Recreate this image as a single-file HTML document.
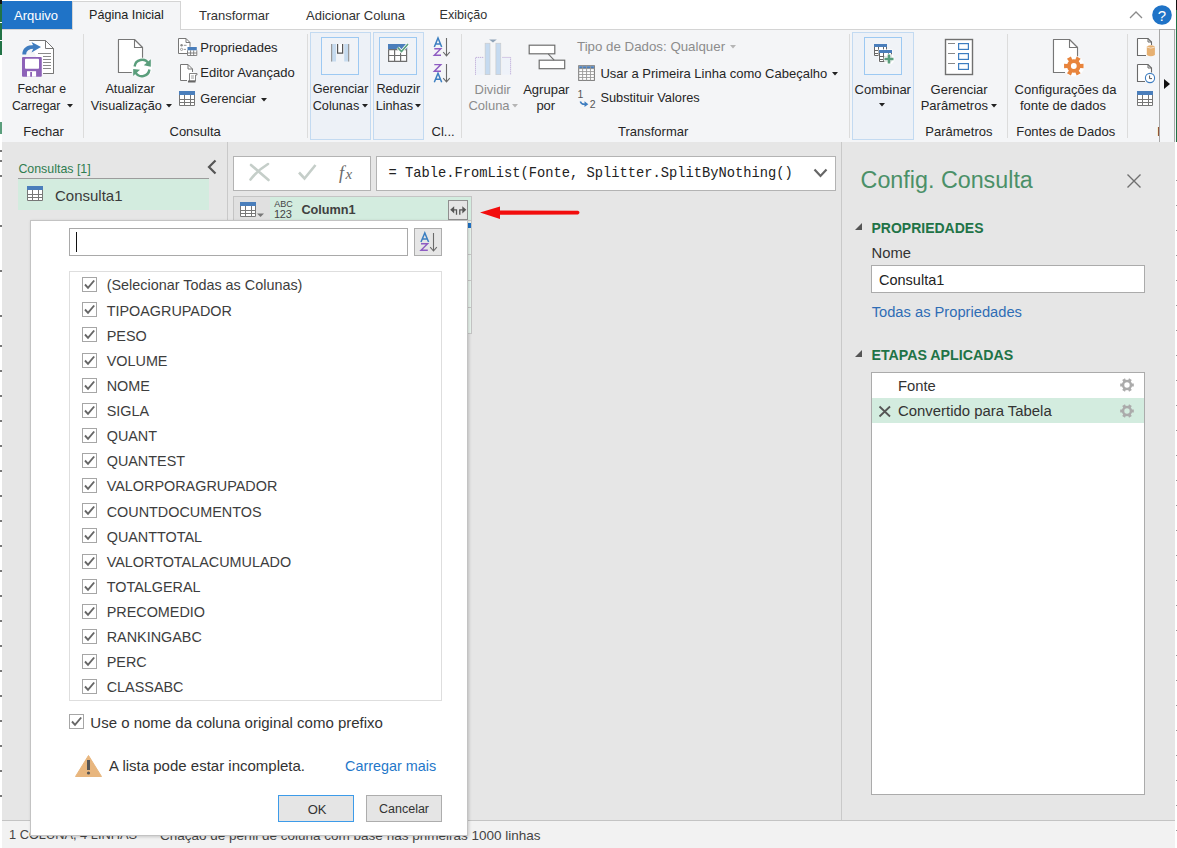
<!DOCTYPE html>
<html><head><meta charset="utf-8"><style>
html,body{margin:0;padding:0;}
body{width:1177px;height:848px;overflow:hidden;position:relative;background:#e6e6e6;font-family:"Liberation Sans",sans-serif;}
.a{position:absolute;}
.t{position:absolute;white-space:pre;line-height:1;font-family:"Liberation Sans",sans-serif;}
svg.a{overflow:visible;}
</style></head><body>
<div class="a" style="left:0px;top:0px;width:1177px;height:29px;background:#fff"></div>
<div class="a" style="left:2px;top:1px;width:70px;height:28px;background:#1f73c7"></div>
<div class="t" style="left:14.0px;top:8.80px;font-size:13px;color:#fff;">Arquivo</div>
<div class="a" style="left:72px;top:1px;width:109px;height:29px;background:#f4f5f7;border:1px solid #d4d4d4;border-bottom:none;box-sizing:border-box"></div>
<div class="t" style="left:89.0px;top:9.13px;font-size:12.6px;color:#222;">Página Inicial</div>
<div class="t" style="left:199.0px;top:8.80px;font-size:13px;color:#333;">Transformar</div>
<div class="t" style="left:306.0px;top:8.80px;font-size:13px;color:#333;">Adicionar Coluna</div>
<div class="t" style="left:439.6px;top:9.13px;font-size:12.6px;color:#333;">Exibição</div>
<svg class="a" style="left:1129px;top:10px;" width="14" height="9" viewBox="0 0 14 9"><path d="M1 8L7 2L13 8" fill="none" stroke="#8a8a8a" stroke-width="1.3"/></svg>
<svg class="a" style="left:1152px;top:5px;" width="20" height="20" viewBox="0 0 20 20"><circle cx="10" cy="10" r="9.8" fill="#1f73c7"/><text x="10" y="15.5" text-anchor="middle" font-family="Liberation Sans" font-size="15" fill="#fff">?</text></svg>
<div class="a" style="left:0px;top:29px;width:1177px;height:113px;background:#f4f5f7;border-top:1px solid #d4d4d4;box-sizing:border-box"></div>
<div class="a" style="left:73px;top:29px;width:107px;height:1px;background:#f4f5f7"></div>
<div class="a" style="left:83px;top:34px;width:1px;height:104px;background:#dcdcdc"></div>
<div class="a" style="left:307px;top:34px;width:1px;height:104px;background:#dcdcdc"></div>
<div class="a" style="left:461px;top:34px;width:1px;height:104px;background:#dcdcdc"></div>
<div class="a" style="left:849px;top:34px;width:1px;height:104px;background:#dcdcdc"></div>
<div class="a" style="left:1007px;top:34px;width:1px;height:104px;background:#dcdcdc"></div>
<div class="a" style="left:1127px;top:34px;width:1px;height:104px;background:#dcdcdc"></div>
<div class="t" style="left:23.3px;top:124.50px;font-size:13px;color:#262626;">Fechar</div>
<div class="t" style="left:169.5px;top:124.50px;font-size:13px;color:#262626;">Consulta</div>
<div class="t" style="left:431.5px;top:124.50px;font-size:13px;color:#262626;">Cl...</div>
<div class="t" style="left:618.0px;top:124.50px;font-size:13px;color:#262626;">Transformar</div>
<div class="t" style="left:925.3px;top:124.50px;font-size:13px;color:#262626;">Parâmetros</div>
<div class="t" style="left:1016.2px;top:124.50px;font-size:13px;color:#262626;">Fontes de Dados</div>
<div class="t" style="left:1157.0px;top:124.50px;font-size:13px;color:#262626;">I</div>
<div class="a" style="left:310px;top:32px;width:61px;height:108px;background:#edf1f7;border:1px solid #c3daf1;box-sizing:border-box"></div>
<div class="a" style="left:321px;top:37px;width:38px;height:38px;background:#f0f3f7;border:1.5px solid #9dc9f2;box-sizing:border-box"></div>
<div class="a" style="left:373px;top:32px;width:51px;height:108px;background:#edf1f7;border:1px solid #c3daf1;box-sizing:border-box"></div>
<div class="a" style="left:379px;top:37px;width:38px;height:38px;background:#f0f3f7;border:1.5px solid #9dc9f2;box-sizing:border-box"></div>
<div class="a" style="left:852px;top:32px;width:62px;height:108px;background:#edf1f7;border:1px solid #c3daf1;box-sizing:border-box"></div>
<div class="a" style="left:864px;top:37px;width:38px;height:38px;background:#f0f3f7;border:1.5px solid #9dc9f2;box-sizing:border-box"></div>
<div class="t" style="left:17.5px;top:83.29px;font-size:12.3px;color:#262626;">Fechar e</div>
<div class="t" style="left:11.9px;top:99.89px;font-size:12.3px;color:#262626;">Carregar</div>
<svg class="a" style="left:67px;top:103.5px;" width="6" height="4" viewBox="0 0 6 4"><path d="M0 0H6L3.0 3.5Z" fill="#222"/></svg>
<div class="t" style="left:105.4px;top:82.95px;font-size:12.7px;color:#262626;">Atualizar</div>
<div class="t" style="left:90.8px;top:99.55px;font-size:12.7px;color:#262626;">Visualização</div>
<svg class="a" style="left:166px;top:103.5px;" width="6" height="4" viewBox="0 0 6 4"><path d="M0 0H6L3.0 3.5Z" fill="#222"/></svg>
<div class="t" style="left:312.7px;top:82.95px;font-size:12.7px;color:#262626;">Gerenciar</div>
<div class="t" style="left:312.7px;top:99.55px;font-size:12.7px;color:#262626;">Colunas</div>
<svg class="a" style="left:362px;top:103.5px;" width="6" height="4" viewBox="0 0 6 4"><path d="M0 0H6L3.0 3.5Z" fill="#222"/></svg>
<div class="t" style="left:376.4px;top:82.95px;font-size:12.7px;color:#262626;">Reduzir</div>
<div class="t" style="left:375.7px;top:99.55px;font-size:12.7px;color:#262626;">Linhas</div>
<svg class="a" style="left:415px;top:103.5px;" width="6" height="4" viewBox="0 0 6 4"><path d="M0 0H6L3.0 3.5Z" fill="#222"/></svg>
<div class="t" style="left:474.5px;top:82.70px;font-size:13px;color:#8c8c8c;">Dividir</div>
<div class="t" style="left:468.4px;top:99.30px;font-size:13px;color:#8c8c8c;">Coluna</div>
<svg class="a" style="left:512px;top:103.5px;" width="6" height="4" viewBox="0 0 6 4"><path d="M0 0H6L3.0 3.5Z" fill="#b5b5b5"/></svg>
<div class="t" style="left:523.2px;top:82.70px;font-size:13px;color:#262626;">Agrupar</div>
<div class="t" style="left:536.4px;top:99.30px;font-size:13px;color:#262626;">por</div>
<div class="t" style="left:854.6px;top:82.70px;font-size:13px;color:#262626;">Combinar</div>
<svg class="a" style="left:879px;top:102.5px;" width="6" height="4" viewBox="0 0 6 4"><path d="M0 0H6L3.0 3.5Z" fill="#222"/></svg>
<div class="t" style="left:930.6px;top:82.70px;font-size:13px;color:#262626;">Gerenciar</div>
<div class="t" style="left:920.7px;top:99.30px;font-size:13px;color:#262626;">Parâmetros</div>
<svg class="a" style="left:991px;top:103.5px;" width="6" height="4" viewBox="0 0 6 4"><path d="M0 0H6L3.0 3.5Z" fill="#222"/></svg>
<div class="t" style="left:1014.6px;top:82.70px;font-size:13px;color:#262626;">Configurações da</div>
<div class="t" style="left:1020.0px;top:99.30px;font-size:13px;color:#262626;">fonte de dados</div>
<div class="t" style="left:200.3px;top:40.80px;font-size:13px;color:#262626;">Propriedades</div>
<div class="t" style="left:200.3px;top:66.40px;font-size:13px;color:#262626;">Editor Avançado</div>
<div class="t" style="left:200.3px;top:92.85px;font-size:12.7px;color:#262626;">Gerenciar</div>
<svg class="a" style="left:261px;top:98px;" width="6" height="4" viewBox="0 0 6 4"><path d="M0 0H6L3.0 3.5Z" fill="#222"/></svg>
<div class="t" style="left:577.0px;top:40.04px;font-size:13.3px;color:#8c8c8c;">Tipo de Dados: Qualquer</div>
<svg class="a" style="left:730px;top:45px;" width="6" height="4" viewBox="0 0 6 4"><path d="M0 0H6L3.0 3.5Z" fill="#b5b5b5"/></svg>
<div class="t" style="left:600.4px;top:66.50px;font-size:13px;color:#262626;">Usar a Primeira Linha como Cabeçalho</div>
<svg class="a" style="left:832px;top:72px;" width="6" height="4" viewBox="0 0 6 4"><path d="M0 0H6L3.0 3.5Z" fill="#222"/></svg>
<div class="t" style="left:600.4px;top:92.16px;font-size:12.8px;color:#262626;">Substituir Valores</div>
<svg class="a" style="left:18px;top:36px" width="40" height="44" viewBox="18 36 40 44"><path d="M29.5 40.5H45.5L53.5 48.5V73.5H43" fill="#fff" stroke="#777" stroke-width="1"/><path d="M36 40.5H45.5L53.5 48.5V73.5H36Z" fill="#fff"/><path d="M29.5 40.5H45.5L53.5 48.5V73.5H43M45.5 40.5V48.5H53.5" fill="none" stroke="#777" stroke-width="1"/><path d="M38 53.5H51M43 56.5H51M43 59.5H51M43 62.5H51M43 65.5H51M43 68.5H51" stroke="#8a8a8a" stroke-width="1"/><rect x="22" y="57" width="19.8" height="19.7" rx="1" fill="#8d62b8"/><rect x="25" y="58.8" width="14" height="10" rx="0.8" fill="#fff"/><rect x="27" y="71.2" width="9.1" height="5.5" fill="#fff"/><rect x="30.2" y="72" width="1.8" height="4.7" fill="#8d62b8"/><path d="M24.2 54.5C24.2 48.5 28.5 46.8 34.5 46.8" fill="none" stroke="#3f7cbf" stroke-width="3.8"/><path d="M31.5 42L41 47L31.5 52.5L34 47Z" fill="#3f7cbf"/></svg>
<svg class="a" style="left:112px;top:34px" width="42" height="46" viewBox="112 34 42 46"><path d="M118.5 39.5H134.5L142.5 47.5V57.5M131.5 72.5H118.5V39.5" fill="#fff" stroke="#777" stroke-width="1.1"/><path d="M119 40H134.5L142 47.5V72H119Z" fill="#fff"/><path d="M118.5 39.5H134.5L142.5 47.5V57.5M131.5 72.5H118.5V39.5M134.5 39.5V47.5H142.5" fill="none" stroke="#777" stroke-width="1.1"/><circle cx="142" cy="68" r="10" fill="#fff" opacity="0.9"/><path d="M134.6 66.5A7.5 7.5 0 0 1 148.5 63.5" fill="none" stroke="#5a9e7c" stroke-width="2.4"/><path d="M143.8 65.2L150.8 66.8V59.2Z" fill="#5a9e7c"/><path d="M149.4 69.5A7.5 7.5 0 0 1 135.5 72.5" fill="none" stroke="#5a9e7c" stroke-width="2.4"/><path d="M133.2 69L140 69.7L133.2 76Z" fill="#5a9e7c"/></svg>
<svg class="a" style="left:176px;top:36px" width="24" height="22" viewBox="176 36 24 22"><path d="M178.5 38.5H186L190 42.5V53.5H178.5Z" fill="#fff" stroke="#777" stroke-width="1"/><path d="M186 38.5V42.5H190" fill="none" stroke="#777" stroke-width="1"/><circle cx="181.6" cy="45.3" r="1.2" fill="#888"/><circle cx="181.6" cy="49.4" r="1.1" fill="none" stroke="#888" stroke-width="0.8"/><path d="M183.8 45.3H186.5M183.8 49.4H186" stroke="#888" stroke-width="0.9"/><rect x="187" y="46.8" width="10" height="9" fill="#fff"/><rect x="187.5" y="47" width="9.3" height="3.3" fill="#4a7ebb"/><path d="M187.5 50.3V55.5H196.8V50.3M187.5 53H196.8M190.6 50.3V55.5M193.7 50.3V55.5" fill="none" stroke="#777" stroke-width="0.9"/></svg>
<svg class="a" style="left:178px;top:62px" width="22" height="24" viewBox="178 62 22 24"><path d="M180.5 64.5H188L192.5 69V80.5H180.5Z" fill="#fff"/><path d="M180.5 64.5H188L192.5 69V72M187 80.5H180.5V64.5" fill="none" stroke="#777" stroke-width="1"/><path d="M188 64.5V69H192.5" fill="none" stroke="#777" stroke-width="1"/><path d="M189.5 73.5H197V75H195.5V81H189.5Z" fill="#fff" stroke="#777" stroke-width="0.9"/><path d="M191 76H194M191 78H194" stroke="#888" stroke-width="0.8"/><path d="M188 80.5H195.5V82.5H188Z" fill="#666"/></svg>
<svg class="a" style="left:177px;top:89px" width="20" height="19" viewBox="177 89 20 19"><rect x="179" y="91" width="16" height="15" fill="#fff"/><rect x="179" y="91" width="16" height="4" fill="#4a7ebb"/><path d="M179.5 95V105.5H194.5V95M184.5 95V106M190.5 95V106M179 99.5H195M179 102.5H195" fill="none" stroke="#777" stroke-width="1"/></svg>
<svg class="a" style="left:328px;top:42px" width="24" height="22" viewBox="328 42 24 22"><rect x="331" y="44" width="5" height="17.5" fill="#c6dbef"/><path d="M331.6 44V61.5" stroke="#999" stroke-width="1.2"/><rect x="344.2" y="44" width="5" height="17.5" fill="#c6dbef"/><path d="M348.6 44V61.5" stroke="#999" stroke-width="1.2"/><path d="M337.6 44V53.2H342.6V44" fill="#fff" stroke="#555" stroke-width="1.2"/></svg>
<svg class="a" style="left:386px;top:42px" width="24" height="22" viewBox="386 42 24 22"><rect x="388" y="44" width="19.2" height="5.6" fill="#4a7ebb"/><path d="M388.6 49.6V61.4H406.6V49.6M388.6 49.6H406.6M388.6 55.5H406.6M394.6 49.6V61.4M400.6 49.6V61.4" fill="#fff" stroke="#6e6e6e" stroke-width="1.2"/><path d="M397.8 47.6L401.5 51.6L408 44" fill="none" stroke="#fff" stroke-width="3.2"/><path d="M397.8 47.6L401.5 51.6L408 44" fill="none" stroke="#5a9e7c" stroke-width="1.6"/></svg>
<svg class="a" style="left:430px;top:36px" width="24" height="48" viewBox="430 36 24 48"><path d="M434.3 47L438 38L441.7 47M435.5 44H440.5" fill="none" stroke="#3c7fc1" stroke-width="1.5"/><path d="M434.3 48.7H440.8L434.3 55.300000000000004H441" fill="none" stroke="#8e5cc2" stroke-width="1.4"/><path d="M446.5 38V55.8M443.2 52.0L446.5 55.8L449.8 52.0" fill="none" stroke="#6a6a6a" stroke-width="1.1"/><path d="M434.3 82.2L438 73.2L441.7 82.2M435.5 79.2H440.5" fill="none" stroke="#3c7fc1" stroke-width="1.5"/><path d="M434.3 64.6H440.8L434.3 71.2H441" fill="none" stroke="#8e5cc2" stroke-width="1.4"/><path d="M446.5 64V81.9M443.2 78.10000000000001L446.5 81.9L449.8 78.10000000000001" fill="none" stroke="#6a6a6a" stroke-width="1.1"/></svg>
<svg class="a" style="left:473px;top:38px" width="40" height="38" viewBox="473 38 40 38"><rect x="475.3" y="57.2" width="8.7" height="17.5" fill="#eef2f9"/><path d="M475.5 74.7V57.4H483.5" fill="none" stroke="#a98cc8" stroke-width="0.8" stroke-dasharray="1 1"/><rect x="502.1" y="57.2" width="8.7" height="17.5" fill="#eef2f9"/><path d="M502.5 57.4H510.6V74.7" fill="none" stroke="#a98cc8" stroke-width="0.8" stroke-dasharray="1 1"/><rect x="485.1" y="43.2" width="4.9" height="31.5" fill="#c5daf0" stroke="#c9c9c9" stroke-width="0.6"/><rect x="495.9" y="43.2" width="4.9" height="31.5" fill="#c5daf0" stroke="#c9c9c9" stroke-width="0.6"/><path d="M489.1 39.4H496.8L493 42.6Z" fill="#8fa3b8"/></svg>
<svg class="a" style="left:527px;top:43px" width="40" height="28" viewBox="527 43 40 28"><rect x="529.2" y="45.2" width="25.6" height="8.6" fill="#fff" stroke="#6e6e6e" stroke-width="1.2"/><rect x="539.2" y="60.2" width="25.5" height="8.5" fill="#fff" stroke="#6e6e6e" stroke-width="1.2"/><path d="M548.2 53.8L554.1 60.2" stroke="#6e6e6e" stroke-width="1.1"/></svg>
<svg class="a" style="left:577px;top:64px" width="20" height="18" viewBox="577 64 20 18"><rect x="578.7" y="65.7" width="15.699999999999932" height="14.700000000000003" fill="#fff" stroke="#777" stroke-width="1"/><rect x="579.2" y="66.2" width="14.699999999999932" height="2.6" fill="#4a7ebb"/><path d="M582.62 65.7V80.4M586.55 65.7V80.4M590.48 65.7V80.4M578.7 68.64H594.4M578.7 71.58H594.4M578.7 74.52H594.4M578.7 77.46H594.4" stroke="#999" stroke-width="0.9"/></svg>
<svg class="a" style="left:576px;top:88px" width="24" height="22" viewBox="576 88 24 22"><text x="577.5" y="97.8" font-family="Liberation Sans" font-size="10.5" fill="#555">1</text><text x="589.8" y="108" font-family="Liberation Sans" font-size="10.5" fill="#555">2</text><path d="M580.3 101.5Q581.5 105 586 104.2" fill="none" stroke="#3d7dc0" stroke-width="1.5"/><path d="M584.5 101.2L588.3 104.3L584.5 107Z" fill="#3d7dc0"/></svg>
<svg class="a" style="left:872px;top:42px" width="24" height="22" viewBox="872 42 24 22"><rect x="874" y="44" width="13" height="12" fill="#fff"/><rect x="874" y="44" width="13" height="3" fill="#4a7ebb"/><path d="M874.5 47V55.5H886.5V47M878.5 47V56M883.5 47V56M874 50.5H887M874 53.5H887" fill="none" stroke="#666" stroke-width="1"/><rect x="878.5" y="49.4" width="14" height="12.8" fill="#fff"/><rect x="879" y="50" width="13" height="12" fill="#fff"/><rect x="879" y="50" width="13" height="3" fill="#4a7ebb"/><path d="M879.5 53V61.5H891.5V53M883.5 53V62M888.5 53V62M879 56.5H892M879 59.5H892" fill="none" stroke="#666" stroke-width="1"/><circle cx="889" cy="59" r="5.5" fill="#fff" opacity="0.85"/><path d="M889 54.5V63.5M884.5 59H893.5" stroke="#5a9e7c" stroke-width="2.6"/></svg>
<svg class="a" style="left:943px;top:37px" width="32" height="40" viewBox="943 37 32 40"><rect x="945.5" y="39.5" width="27" height="35" fill="#fff" stroke="#707070" stroke-width="1.4"/><path d="M948 43.5H955M948 53.5H955M948 63.5H955" stroke="#888" stroke-width="1.1"/><rect x="958.6" y="43.6" width="9.8" height="5.8" fill="none" stroke="#3d7dc0" stroke-width="1.2"/><rect x="958.6" y="53.6" width="9.8" height="5.8" fill="none" stroke="#3d7dc0" stroke-width="1.2"/><rect x="958.6" y="63.6" width="9.8" height="5.8" fill="none" stroke="#3d7dc0" stroke-width="1.2"/></svg>
<svg class="a" style="left:1050px;top:37px" width="38" height="42" viewBox="1050 37 38 42"><path d="M1053.5 39.5H1069.5L1077.5 47.5V57M1065 72.5H1053.5V39.5" fill="#fff" stroke="#777" stroke-width="1.1"/><path d="M1054 40H1069.5L1077 47.5V72H1054Z" fill="#fff"/><path d="M1053.5 39.5H1069.5L1077.5 47.5V55.5M1065 72.5H1053.5V39.5M1069.5 39.5V47.5H1077.5" fill="none" stroke="#777" stroke-width="1.1"/><circle cx="1073.8" cy="66" r="10.5" fill="#fff" opacity="0.9"/><path d="M1079.69 62.60L1080.32 64.07L1083.54 63.72L1083.54 68.28L1080.32 67.93L1079.69 69.40L1078.73 70.68L1080.65 73.29L1076.69 75.57L1075.39 72.61L1073.80 72.80L1072.21 72.61L1070.91 75.57L1066.95 73.29L1068.87 70.68L1067.91 69.40L1067.28 67.93L1064.06 68.28L1064.06 63.72L1067.28 64.07L1067.91 62.60L1068.87 61.32L1066.95 58.71L1070.91 56.43L1072.21 59.39L1073.80 59.20L1075.39 59.39L1076.69 56.43L1080.65 58.71L1078.73 61.32ZM1076.7 66A2.9 2.9 0 1 0 1070.8999999999999 66A2.9 2.9 0 1 0 1076.7 66Z" fill="#e8843c" fill-rule="evenodd"/></svg>
<svg class="a" style="left:1135px;top:36px" width="22" height="72" viewBox="1135 36 22 72"><path d="M1137.5 38.5H1148L1151.5 42V55.5H1137.5Z" fill="#fff"/><path d="M1137.5 38.5H1148L1151.5 42V45M1146 55.5H1137.5V38.5" fill="none" stroke="#6a6a6a" stroke-width="1.1"/><path d="M1148 38.5V42H1151.5" fill="none" stroke="#6a6a6a" stroke-width="1"/><path d="M1146.8 46.5V55Q1150.8 57.5 1154.9 55V46.5Q1150.8 44 1146.8 46.5Z" fill="#e6b071"/><path d="M1146.8 47Q1150.8 49.3 1154.9 47" fill="none" stroke="#fff" stroke-width="0.6"/><path d="M1137.5 64.5H1148L1151.5 68V81.5H1137.5Z" fill="#fff"/><path d="M1137.5 64.5H1148L1151.5 68V72.5M1145 81.5H1137.5V64.5" fill="none" stroke="#6a6a6a" stroke-width="1.1"/><path d="M1148 64.5V68H1151.5" fill="none" stroke="#6a6a6a" stroke-width="1"/><circle cx="1150" cy="78" r="4.6" fill="#fff" stroke="#3d7dc0" stroke-width="1.1"/><path d="M1149.6 75.5V78.6H1152" fill="none" stroke="#444" stroke-width="0.9"/><rect x="1137" y="91" width="16" height="15" fill="#fff"/><rect x="1137" y="91" width="16" height="4" fill="#4a7ebb"/><path d="M1137.5 95V105.5H1152.5V95M1142.5 95V106M1148.5 95V106M1137 99.5H1153M1137 102.5H1153" fill="none" stroke="#777" stroke-width="1"/></svg>
<div class="a" style="left:1159px;top:29px;width:16px;height:114px;background:#f4f5f7;border:1px solid #a8a8a8;box-sizing:border-box"></div>
<svg class="a" style="left:1163px;top:79px;" width="8" height="10" viewBox="0 0 8 10"><path d="M1 0V10L7 5Z" fill="#111"/></svg>
<div class="a" style="left:0px;top:142px;width:1177px;height:678px;background:#e6e6e6"></div>
<div class="a" style="left:227px;top:142px;width:1px;height:678px;background:#c9c9c9"></div>
<div class="a" style="left:841px;top:142px;width:1px;height:678px;background:#c9c9c9"></div>
<div class="t" style="left:18.4px;top:163.10px;font-size:12.4px;color:#2f7d50;transform:scaleY(1.08);transform-origin:0 80%;">Consultas [1]</div>
<svg class="a" style="left:206px;top:159px;" width="12" height="16" viewBox="0 0 12 16"><path d="M9.5 1.5L3 8L9.5 14.5" fill="none" stroke="#555" stroke-width="2.2"/></svg>
<div class="a" style="left:18px;top:178px;width:191px;height:1px;background:#9c9c9c"></div>
<div class="a" style="left:18px;top:179px;width:191px;height:31px;background:#d3ecdf"></div>
<div class="t" style="left:55.0px;top:188.00px;font-size:15px;color:#3a3a3a;">Consulta1</div>
<div class="a" style="left:233px;top:156px;width:138px;height:35px;background:#fff;border:1px solid #b3b3b3;box-sizing:border-box"></div>
<div class="a" style="left:376px;top:156px;width:460px;height:35px;background:#fff;border:1px solid #b3b3b3;box-sizing:border-box"></div>
<div class="t" style="left:388.4px;top:167.36px;font-size:13.75px;color:#222;font-family:'Liberation Mono',monospace;">= Table.FromList(Fonte, Splitter.SplitByNothing()</div>
<div class="a" style="left:233px;top:196px;width:239px;height:25px;background:#e0e0e0;border:1px solid #c4c4c4;box-sizing:border-box"></div>
<div class="a" style="left:270px;top:197px;width:201px;height:23px;background:#d3ecdf"></div>
<div class="t" style="left:274.2px;top:199.78px;font-size:9px;color:#444;">ABC</div>
<div class="t" style="left:274.0px;top:208.89px;font-size:11px;color:#444;letter-spacing:-0.3px;">123</div>
<div class="t" style="left:301.4px;top:204.25px;font-size:12.7px;color:#404040;font-weight:bold;">Column1</div>
<div class="a" style="left:468px;top:221px;width:4px;height:113px;background:#eaf6ef;border-right:1px solid #c4c4c4;box-sizing:border-box"></div>
<div class="a" style="left:468px;top:254px;width:3px;height:1px;background:#c9c9c9"></div>
<div class="a" style="left:468px;top:280px;width:3px;height:1px;background:#c9c9c9"></div>
<div class="a" style="left:468px;top:307px;width:3px;height:1px;background:#c9c9c9"></div>
<div class="a" style="left:468px;top:333px;width:3px;height:1px;background:#c9c9c9"></div>
<div class="a" style="left:468px;top:223px;width:3px;height:5px;background:#1f73c7"></div>
<svg class="a" style="left:478px;top:204px;" width="106" height="18" viewBox="0 0 106 18"><path d="M2 8.5L22 2.5V6.5L100 6.8Q103 8.5 100 10.5L22 10.8V15Z" fill="#f20d0d"/></svg>
<svg class="a" style="left:25px;top:184px" width="20" height="19" viewBox="25 184 20 19"><rect x="27" y="186" width="16" height="15" fill="#fff"/><rect x="27" y="186" width="16" height="4" fill="#4a7ebb"/><path d="M27.5 190V200.5H42.5V190M32.5 190V201M38.5 190V201M27 194.5H43M27 197.5H43" fill="none" stroke="#777" stroke-width="1"/></svg>
<svg class="a" style="left:246px;top:161px" width="26" height="24" viewBox="246 161 26 24"><path d="M250.5 179.5Q258 170 268 164M251 165Q258 171 268.5 180" fill="none" stroke="#c5cec9" stroke-width="2.6" stroke-linecap="round"/></svg>
<svg class="a" style="left:296px;top:162px" width="22" height="20" viewBox="296 162 22 20"><path d="M299 172.5L304.5 178.5L315.5 165" fill="none" stroke="#c5cec9" stroke-width="2.6"/></svg>
<svg class="a" style="left:336px;top:160px" width="22" height="24" viewBox="336 160 22 24"><text x="339" y="178.5" font-family="Liberation Serif" font-style="italic" font-size="18" fill="#6a6a6a">f</text><text x="345.5" y="178.5" font-family="Liberation Serif" font-style="italic" font-size="15" fill="#6a6a6a">x</text></svg>
<svg class="a" style="left:812px;top:166px" width="18" height="14" viewBox="812 166 18 14"><path d="M814.5 169.5L820.5 176L826.5 169.5" fill="none" stroke="#666" stroke-width="2.2"/></svg>
<svg class="a" style="left:237px;top:199px" width="30" height="20" viewBox="237 199 30 20"><rect x="240" y="202" width="16" height="15" fill="#fff"/><rect x="240" y="202" width="16" height="4" fill="#4a7ebb"/><path d="M240.5 206V216.5H255.5V206M245.5 206V217M251.5 206V217M240 210.5H256M240 213.5H256" fill="none" stroke="#777" stroke-width="1"/><path d="M257 213.5H264L260.5 217Z" fill="#777"/></svg>
<div class="a" style="left:448px;top:200px;width:20px;height:20px;background:#e5e5e5;border:1px solid #8f8f8f;box-sizing:border-box"></div>
<svg class="a" style="left:448px;top:200px" width="20" height="20" viewBox="448 200 20 20"><path d="M450.2 209.8L454.2 206.2V213.4Z" fill="#555"/><path d="M462.3 206.2L466.3 209.8L462.3 213.4Z" fill="#555"/><path d="M453.5 209.8H456.5V214.8M462.8 209.8H459.8V214.8" fill="none" stroke="#555" stroke-width="1.3"/></svg>
<div class="t" style="left:860.6px;top:168.98px;font-size:23.3px;color:#4b9068;">Config. Consulta</div>
<svg class="a" style="left:1126px;top:173px;" width="16" height="16" viewBox="0 0 16 16"><path d="M1.5 1.5L14.5 14.5M14.5 1.5L1.5 14.5" stroke="#707070" stroke-width="1.4"/></svg>
<svg class="a" style="left:855px;top:222px;" width="8" height="9" viewBox="0 0 8 9"><path d="M7 1V8H0Z" fill="#555"/></svg>
<div class="t" style="left:871.5px;top:220.95px;font-size:14px;color:#217346;font-weight:bold;">PROPRIEDADES</div>
<div class="t" style="left:871.5px;top:246.37px;font-size:14.8px;color:#333;">Nome</div>
<div class="a" style="left:871px;top:265px;width:274px;height:28px;background:#fff;border:1px solid #ababab;box-sizing:border-box"></div>
<div class="t" style="left:879.0px;top:272.63px;font-size:14.5px;color:#222;">Consulta1</div>
<div class="t" style="left:871.7px;top:305.46px;font-size:14.7px;color:#2f6db5;">Todas as Propriedades</div>
<svg class="a" style="left:855px;top:349px;" width="8" height="9" viewBox="0 0 8 9"><path d="M7 1V8H0Z" fill="#555"/></svg>
<div class="t" style="left:871.5px;top:347.78px;font-size:14.2px;color:#217346;font-weight:bold;">ETAPAS APLICADAS</div>
<div class="a" style="left:871px;top:372px;width:274px;height:423px;background:#fff;border:1px solid #ababab;box-sizing:border-box"></div>
<div class="t" style="left:898.0px;top:379.37px;font-size:14.8px;color:#333;">Fonte</div>
<div class="a" style="left:872px;top:398px;width:272px;height:25px;background:#d3ecdf"></div>
<svg class="a" style="left:878px;top:405px;" width="14" height="13" viewBox="0 0 14 13"><path d="M1.5 1.5L12 11.5M12 1.5L1.5 11.5" stroke="#555" stroke-width="1.8"/></svg>
<div class="t" style="left:898.0px;top:403.79px;font-size:14.9px;color:#333;">Convertido para Tabela</div>
<svg class="a" style="left:1117px;top:375px" width="20" height="45" viewBox="1117 375 20 45"><path d="M1131.50 382.40L1131.99 383.52L1133.82 383.40L1133.82 386.60L1131.99 386.48L1131.50 387.60L1130.77 388.58L1131.79 390.10L1129.02 391.70L1128.21 390.06L1127.00 390.20L1125.79 390.06L1124.98 391.70L1122.21 390.10L1123.23 388.58L1122.50 387.60L1122.01 386.48L1120.18 386.60L1120.18 383.40L1122.01 383.52L1122.50 382.40L1123.23 381.42L1122.21 379.90L1124.98 378.30L1125.79 379.94L1127.00 379.80L1128.21 379.94L1129.02 378.30L1131.79 379.90L1130.77 381.42ZM1129.7 385A2.7 2.7 0 1 0 1124.3 385A2.7 2.7 0 1 0 1129.7 385Z" fill="#ababab" fill-rule="evenodd"/><path d="M1131.50 408.40L1131.99 409.52L1133.82 409.40L1133.82 412.60L1131.99 412.48L1131.50 413.60L1130.77 414.58L1131.79 416.10L1129.02 417.70L1128.21 416.06L1127.00 416.20L1125.79 416.06L1124.98 417.70L1122.21 416.10L1123.23 414.58L1122.50 413.60L1122.01 412.48L1120.18 412.60L1120.18 409.40L1122.01 409.52L1122.50 408.40L1123.23 407.42L1122.21 405.90L1124.98 404.30L1125.79 405.94L1127.00 405.80L1128.21 405.94L1129.02 404.30L1131.79 405.90L1130.77 407.42ZM1129.7 411A2.7 2.7 0 1 0 1124.3 411A2.7 2.7 0 1 0 1129.7 411Z" fill="#ababab" fill-rule="evenodd"/></svg>
<div class="a" style="left:1175px;top:142px;width:2px;height:706px;background:#fff"></div>
<div class="a" style="left:1176px;top:180px;width:1px;height:1px;background:#999"></div>
<div class="a" style="left:1176px;top:205px;width:1px;height:1px;background:#999"></div>
<div class="a" style="left:1176px;top:230px;width:1px;height:1px;background:#999"></div>
<div class="a" style="left:1176px;top:255px;width:1px;height:1px;background:#999"></div>
<div class="a" style="left:1176px;top:280px;width:1px;height:1px;background:#999"></div>
<div class="a" style="left:1176px;top:305px;width:1px;height:1px;background:#999"></div>
<div class="a" style="left:1176px;top:330px;width:1px;height:1px;background:#999"></div>
<div class="a" style="left:1176px;top:355px;width:1px;height:1px;background:#999"></div>
<div class="a" style="left:1176px;top:380px;width:1px;height:1px;background:#999"></div>
<div class="a" style="left:1176px;top:405px;width:1px;height:1px;background:#999"></div>
<div class="a" style="left:1176px;top:430px;width:1px;height:1px;background:#999"></div>
<div class="a" style="left:1176px;top:455px;width:1px;height:1px;background:#999"></div>
<div class="a" style="left:1176px;top:480px;width:1px;height:1px;background:#999"></div>
<div class="a" style="left:1176px;top:505px;width:1px;height:1px;background:#999"></div>
<div class="a" style="left:1176px;top:530px;width:1px;height:1px;background:#999"></div>
<div class="a" style="left:1176px;top:555px;width:1px;height:1px;background:#999"></div>
<div class="a" style="left:1176px;top:580px;width:1px;height:1px;background:#999"></div>
<div class="a" style="left:1176px;top:605px;width:1px;height:1px;background:#999"></div>
<div class="a" style="left:1176px;top:630px;width:1px;height:1px;background:#999"></div>
<div class="a" style="left:1176px;top:655px;width:1px;height:1px;background:#999"></div>
<div class="a" style="left:1176px;top:680px;width:1px;height:1px;background:#999"></div>
<div class="a" style="left:1176px;top:705px;width:1px;height:1px;background:#999"></div>
<div class="a" style="left:1176px;top:730px;width:1px;height:1px;background:#999"></div>
<div class="a" style="left:1176px;top:755px;width:1px;height:1px;background:#999"></div>
<div class="a" style="left:1176px;top:780px;width:1px;height:1px;background:#999"></div>
<div class="a" style="left:1176px;top:805px;width:1px;height:1px;background:#999"></div>
<div class="a" style="left:1176px;top:830px;width:1px;height:1px;background:#999"></div>
<div class="a" style="left:1176px;top:0px;width:1px;height:10px;background:#111"></div>
<div class="a" style="left:1176px;top:10px;width:1px;height:132px;background:#217346"></div>
<div class="a" style="left:0px;top:0px;width:2px;height:848px;background:#fff"></div>
<div class="a" style="left:0px;top:0px;width:2px;height:4px;background:#111"></div>
<div class="a" style="left:0px;top:4px;width:2px;height:18px;background:#217346"></div>
<div class="a" style="left:0px;top:23px;width:2px;height:17px;background:#217346"></div>
<div class="a" style="left:0px;top:41px;width:2px;height:14px;background:#217346"></div>
<div class="a" style="left:0px;top:122px;width:2px;height:12px;background:#5a9e7c"></div>
<div class="a" style="left:0px;top:150px;width:2px;height:2px;background:#777"></div>
<div class="a" style="left:0px;top:160px;width:2px;height:2px;background:#777"></div>
<div class="a" style="left:0px;top:175px;width:2px;height:2px;background:#777"></div>
<div class="a" style="left:0px;top:225px;width:2px;height:2px;background:#777"></div>
<div class="a" style="left:0px;top:270px;width:2px;height:2px;background:#777"></div>
<div class="a" style="left:0px;top:315px;width:2px;height:2px;background:#777"></div>
<div class="a" style="left:0px;top:345px;width:2px;height:2px;background:#777"></div>
<div class="a" style="left:0px;top:370px;width:2px;height:2px;background:#777"></div>
<div class="a" style="left:0px;top:395px;width:2px;height:2px;background:#777"></div>
<div class="a" style="left:0px;top:420px;width:2px;height:2px;background:#777"></div>
<div class="a" style="left:0px;top:445px;width:2px;height:2px;background:#777"></div>
<div class="a" style="left:0px;top:470px;width:2px;height:2px;background:#777"></div>
<div class="a" style="left:0px;top:495px;width:2px;height:2px;background:#777"></div>
<div class="a" style="left:0px;top:520px;width:2px;height:2px;background:#777"></div>
<div class="a" style="left:0px;top:545px;width:2px;height:2px;background:#777"></div>
<div class="a" style="left:0px;top:570px;width:2px;height:2px;background:#777"></div>
<div class="a" style="left:0px;top:595px;width:2px;height:2px;background:#777"></div>
<div class="a" style="left:0px;top:620px;width:2px;height:2px;background:#777"></div>
<div class="a" style="left:0px;top:645px;width:2px;height:2px;background:#777"></div>
<div class="a" style="left:0px;top:670px;width:2px;height:2px;background:#777"></div>
<div class="a" style="left:0px;top:695px;width:2px;height:2px;background:#777"></div>
<div class="a" style="left:0px;top:720px;width:2px;height:2px;background:#777"></div>
<div class="a" style="left:0px;top:745px;width:2px;height:2px;background:#777"></div>
<div class="a" style="left:0px;top:770px;width:2px;height:2px;background:#777"></div>
<div class="a" style="left:0px;top:795px;width:2px;height:2px;background:#777"></div>
<div class="a" style="left:0px;top:830px;width:2px;height:2px;background:#777"></div>
<div class="a" style="left:0px;top:820px;width:1175px;height:28px;background:#f2f2f2;border-top:1px solid #c4c4c4;box-sizing:border-box"></div>
<div class="a" style="left:0px;top:820px;width:2px;height:28px;background:#fff"></div>
<div class="t" style="left:9.0px;top:829.46px;font-size:12.8px;color:#444;">1 COLUNA, 4 LINHAS</div>
<div class="t" style="left:160.0px;top:829.07px;font-size:13.5px;color:#444;">Criação de perfil de coluna com base nas primeiras 1000 linhas</div>
<div class="a" style="left:30px;top:220px;width:438px;height:616px;background:#fff;border:1px solid #c3c3c3;box-sizing:border-box;box-shadow:1px 1px 3px rgba(0,0,0,0.18)"></div>
<div class="a" style="left:69px;top:228px;width:339px;height:28px;background:#fff;border:1.5px solid #a9a9a9;box-sizing:border-box"></div>
<div class="a" style="left:76px;top:232px;width:1px;height:20px;background:#111"></div>
<div class="a" style="left:414px;top:228px;width:28px;height:28px;background:#e6e6e6;border:1.5px solid #adadad;box-sizing:border-box"></div>
<svg class="a" style="left:414px;top:228px" width="28" height="28" viewBox="414 228 28 28"><path d="M421 242L424.8 233L428.6 242M422.2 239H427.4" fill="none" stroke="#3c7fc1" stroke-width="1.5"/><path d="M421 243.7H427.6L421 250.3H427.8" fill="none" stroke="#8e5cc2" stroke-width="1.4"/><path d="M433.5 233V251M430.2 247.2L433.5 251L436.8 247.2" fill="none" stroke="#6a6a6a" stroke-width="1.1"/></svg>
<div class="a" style="left:69px;top:271px;width:373px;height:430px;background:#fff;border:1px solid #dedede;box-sizing:border-box"></div>
<div class="a" style="left:82px;top:277px;width:15px;height:15px;background:#fff;border:1px solid #a6a6a6;box-sizing:border-box"></div>
<svg class="a" style="left:82px;top:277px;" width="15" height="15" viewBox="0 0 15 15"><path d="M3 7.5L6 10.8L12.2 3.5" fill="none" stroke="#666" stroke-width="1.9"/></svg>
<div class="t" style="left:106.7px;top:278.41px;font-size:14.4px;color:#3d3d3d;">(Selecionar Todas as Colunas)</div>
<div class="a" style="left:82px;top:302px;width:15px;height:15px;background:#fff;border:1px solid #a6a6a6;box-sizing:border-box"></div>
<svg class="a" style="left:82px;top:302px;" width="15" height="15" viewBox="0 0 15 15"><path d="M3 7.5L6 10.8L12.2 3.5" fill="none" stroke="#666" stroke-width="1.9"/></svg>
<div class="t" style="left:106.7px;top:303.54px;font-size:14.4px;color:#3d3d3d;">TIPOAGRUPADOR</div>
<div class="a" style="left:82px;top:327px;width:15px;height:15px;background:#fff;border:1px solid #a6a6a6;box-sizing:border-box"></div>
<svg class="a" style="left:82px;top:327px;" width="15" height="15" viewBox="0 0 15 15"><path d="M3 7.5L6 10.8L12.2 3.5" fill="none" stroke="#666" stroke-width="1.9"/></svg>
<div class="t" style="left:106.7px;top:328.66px;font-size:14.4px;color:#3d3d3d;">PESO</div>
<div class="a" style="left:82px;top:353px;width:15px;height:15px;background:#fff;border:1px solid #a6a6a6;box-sizing:border-box"></div>
<svg class="a" style="left:82px;top:353px;" width="15" height="15" viewBox="0 0 15 15"><path d="M3 7.5L6 10.8L12.2 3.5" fill="none" stroke="#666" stroke-width="1.9"/></svg>
<div class="t" style="left:106.7px;top:353.79px;font-size:14.4px;color:#3d3d3d;">VOLUME</div>
<div class="a" style="left:82px;top:378px;width:15px;height:15px;background:#fff;border:1px solid #a6a6a6;box-sizing:border-box"></div>
<svg class="a" style="left:82px;top:378px;" width="15" height="15" viewBox="0 0 15 15"><path d="M3 7.5L6 10.8L12.2 3.5" fill="none" stroke="#666" stroke-width="1.9"/></svg>
<div class="t" style="left:106.7px;top:378.91px;font-size:14.4px;color:#3d3d3d;">NOME</div>
<div class="a" style="left:82px;top:403px;width:15px;height:15px;background:#fff;border:1px solid #a6a6a6;box-sizing:border-box"></div>
<svg class="a" style="left:82px;top:403px;" width="15" height="15" viewBox="0 0 15 15"><path d="M3 7.5L6 10.8L12.2 3.5" fill="none" stroke="#666" stroke-width="1.9"/></svg>
<div class="t" style="left:106.7px;top:404.04px;font-size:14.4px;color:#3d3d3d;">SIGLA</div>
<div class="a" style="left:82px;top:428px;width:15px;height:15px;background:#fff;border:1px solid #a6a6a6;box-sizing:border-box"></div>
<svg class="a" style="left:82px;top:428px;" width="15" height="15" viewBox="0 0 15 15"><path d="M3 7.5L6 10.8L12.2 3.5" fill="none" stroke="#666" stroke-width="1.9"/></svg>
<div class="t" style="left:106.7px;top:429.16px;font-size:14.4px;color:#3d3d3d;">QUANT</div>
<div class="a" style="left:82px;top:453px;width:15px;height:15px;background:#fff;border:1px solid #a6a6a6;box-sizing:border-box"></div>
<svg class="a" style="left:82px;top:453px;" width="15" height="15" viewBox="0 0 15 15"><path d="M3 7.5L6 10.8L12.2 3.5" fill="none" stroke="#666" stroke-width="1.9"/></svg>
<div class="t" style="left:106.7px;top:454.29px;font-size:14.4px;color:#3d3d3d;">QUANTEST</div>
<div class="a" style="left:82px;top:478px;width:15px;height:15px;background:#fff;border:1px solid #a6a6a6;box-sizing:border-box"></div>
<svg class="a" style="left:82px;top:478px;" width="15" height="15" viewBox="0 0 15 15"><path d="M3 7.5L6 10.8L12.2 3.5" fill="none" stroke="#666" stroke-width="1.9"/></svg>
<div class="t" style="left:106.7px;top:479.41px;font-size:14.4px;color:#3d3d3d;">VALORPORAGRUPADOR</div>
<div class="a" style="left:82px;top:503px;width:15px;height:15px;background:#fff;border:1px solid #a6a6a6;box-sizing:border-box"></div>
<svg class="a" style="left:82px;top:503px;" width="15" height="15" viewBox="0 0 15 15"><path d="M3 7.5L6 10.8L12.2 3.5" fill="none" stroke="#666" stroke-width="1.9"/></svg>
<div class="t" style="left:106.7px;top:504.54px;font-size:14.4px;color:#3d3d3d;">COUNTDOCUMENTOS</div>
<div class="a" style="left:82px;top:528px;width:15px;height:15px;background:#fff;border:1px solid #a6a6a6;box-sizing:border-box"></div>
<svg class="a" style="left:82px;top:528px;" width="15" height="15" viewBox="0 0 15 15"><path d="M3 7.5L6 10.8L12.2 3.5" fill="none" stroke="#666" stroke-width="1.9"/></svg>
<div class="t" style="left:106.7px;top:529.66px;font-size:14.4px;color:#3d3d3d;">QUANTTOTAL</div>
<div class="a" style="left:82px;top:554px;width:15px;height:15px;background:#fff;border:1px solid #a6a6a6;box-sizing:border-box"></div>
<svg class="a" style="left:82px;top:554px;" width="15" height="15" viewBox="0 0 15 15"><path d="M3 7.5L6 10.8L12.2 3.5" fill="none" stroke="#666" stroke-width="1.9"/></svg>
<div class="t" style="left:106.7px;top:554.79px;font-size:14.4px;color:#3d3d3d;">VALORTOTALACUMULADO</div>
<div class="a" style="left:82px;top:579px;width:15px;height:15px;background:#fff;border:1px solid #a6a6a6;box-sizing:border-box"></div>
<svg class="a" style="left:82px;top:579px;" width="15" height="15" viewBox="0 0 15 15"><path d="M3 7.5L6 10.8L12.2 3.5" fill="none" stroke="#666" stroke-width="1.9"/></svg>
<div class="t" style="left:106.7px;top:579.91px;font-size:14.4px;color:#3d3d3d;">TOTALGERAL</div>
<div class="a" style="left:82px;top:604px;width:15px;height:15px;background:#fff;border:1px solid #a6a6a6;box-sizing:border-box"></div>
<svg class="a" style="left:82px;top:604px;" width="15" height="15" viewBox="0 0 15 15"><path d="M3 7.5L6 10.8L12.2 3.5" fill="none" stroke="#666" stroke-width="1.9"/></svg>
<div class="t" style="left:106.7px;top:605.04px;font-size:14.4px;color:#3d3d3d;">PRECOMEDIO</div>
<div class="a" style="left:82px;top:629px;width:15px;height:15px;background:#fff;border:1px solid #a6a6a6;box-sizing:border-box"></div>
<svg class="a" style="left:82px;top:629px;" width="15" height="15" viewBox="0 0 15 15"><path d="M3 7.5L6 10.8L12.2 3.5" fill="none" stroke="#666" stroke-width="1.9"/></svg>
<div class="t" style="left:106.7px;top:630.16px;font-size:14.4px;color:#3d3d3d;">RANKINGABC</div>
<div class="a" style="left:82px;top:654px;width:15px;height:15px;background:#fff;border:1px solid #a6a6a6;box-sizing:border-box"></div>
<svg class="a" style="left:82px;top:654px;" width="15" height="15" viewBox="0 0 15 15"><path d="M3 7.5L6 10.8L12.2 3.5" fill="none" stroke="#666" stroke-width="1.9"/></svg>
<div class="t" style="left:106.7px;top:655.29px;font-size:14.4px;color:#3d3d3d;">PERC</div>
<div class="a" style="left:82px;top:679px;width:15px;height:15px;background:#fff;border:1px solid #a6a6a6;box-sizing:border-box"></div>
<svg class="a" style="left:82px;top:679px;" width="15" height="15" viewBox="0 0 15 15"><path d="M3 7.5L6 10.8L12.2 3.5" fill="none" stroke="#666" stroke-width="1.9"/></svg>
<div class="t" style="left:106.7px;top:680.41px;font-size:14.4px;color:#3d3d3d;">CLASSABC</div>
<div class="a" style="left:69px;top:714px;width:15px;height:15px;background:#fff;border:1px solid #a6a6a6;box-sizing:border-box"></div>
<svg class="a" style="left:69px;top:714px;" width="15" height="15" viewBox="0 0 15 15"><path d="M3 7.5L6 10.8L12.2 3.5" fill="none" stroke="#666" stroke-width="1.9"/></svg>
<div class="t" style="left:90.3px;top:715.00px;font-size:15px;color:#333;">Use o nome da coluna original como prefixo</div>
<svg class="a" style="left:75px;top:754px;" width="28" height="24" viewBox="0 0 28 24"><path d="M13.5 1.5L26.5 22.5H0.5Z" fill="#e8b67e" stroke="#e8b67e" stroke-linejoin="round" stroke-width="1"/><rect x="12" y="6" width="3" height="10" fill="#555"/><circle cx="13.5" cy="19" r="1.6" fill="#555"/></svg>
<div class="t" style="left:109.1px;top:758.00px;font-size:15px;color:#333;">A lista pode estar incompleta.</div>
<div class="t" style="left:345.0px;top:758.61px;font-size:14.4px;color:#1f77c9;">Carregar mais</div>
<div class="a" style="left:278px;top:795px;width:76px;height:27px;background:#e5e5e5;border:1px solid #3d9be9;box-sizing:border-box"></div>
<div class="t" style="left:307.7px;top:802.80px;font-size:13px;color:#333;">OK</div>
<div class="a" style="left:366px;top:795px;width:76px;height:27px;background:#e5e5e5;border:1px solid #adadad;box-sizing:border-box"></div>
<div class="t" style="left:379.0px;top:803.22px;font-size:12.5px;color:#333;">Cancelar</div>
</body></html>
